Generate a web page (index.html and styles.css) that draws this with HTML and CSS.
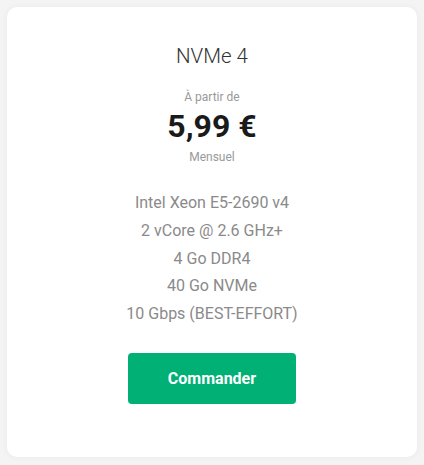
FILE: index.html
```html
<!DOCTYPE html>
<html lang="fr">
<head>
    <meta charset="UTF-8">
    <meta name="viewport" content="width=device-width, initial-scale=1.0">
    <title>NVMe 4</title>
    <link rel="stylesheet" href="styles.css">
</head>
<body>
    <div class="offer-card">
        <h2 class="offer-title">NVMe 4</h2>

        <div class="offer-price">
            <span class="price-from">À partir de</span>
            <span class="price-value">5,99 €</span>
            <span class="price-period">Mensuel</span>
        </div>

        <ul class="offer-specs">
            <li>Intel Xeon E5-2690 v4</li>
            <li>2 vCore @ 2.6 GHz+</li>
            <li>4 Go DDR4</li>
            <li>40 Go NVMe</li>
            <li>10 Gbps (BEST-EFFORT)</li>
        </ul>

        <a href="#" class="order-button">Commander</a>
    </div>
</body>
</html>
```

FILE: styles.css
```css
/* page */
body {
    font-family: Roboto, "Noto Sans", Arial, sans-serif;
    margin: 0;
    padding: 7px;
    background-color: #f4f4f4;
}

/* card */
.offer-card {
    background-color: #fff;
    border-radius: 10px;
    box-shadow: 0 0 8px rgba(0, 0, 0, 0.05);
    height: 450px;
    box-sizing: border-box;
    padding-top: 35px;
    display: flex;
    flex-direction: column;
    align-items: center;
    text-align: center;
}

.offer-title {
    margin: 0;
    font-size: 20.5px;
    font-weight: 300;
    color: #333;
    line-height: 28px;
}

.offer-price {
    display: flex;
    flex-direction: column;
    align-items: center;
    margin-top: 19px;
}

.price-from,
.price-period {
    font-size: 12px;
    color: #999;
    line-height: 16px;
}

.price-value {
    font-size: 32px;
    font-weight: 700;
    color: #1a1a1a;
    line-height: 40px;
    margin: 1px 0 3px;
}

.offer-specs {
    list-style: none;
    margin: 24px 0 0;
    padding: 0;
}

.offer-specs li {
    font-size: 16px;
    color: #8a8a8a;
    line-height: 27.8px;
}

/* button */
.order-button {
    display: block;
    margin-top: 25px;
    width: 168px;
    height: 51px;
    line-height: 51px;
    background-color: #00b075;
    color: #fff;
    border-radius: 4px;
    font-size: 16px;
    font-weight: 700;
    text-decoration: none;
}
```
